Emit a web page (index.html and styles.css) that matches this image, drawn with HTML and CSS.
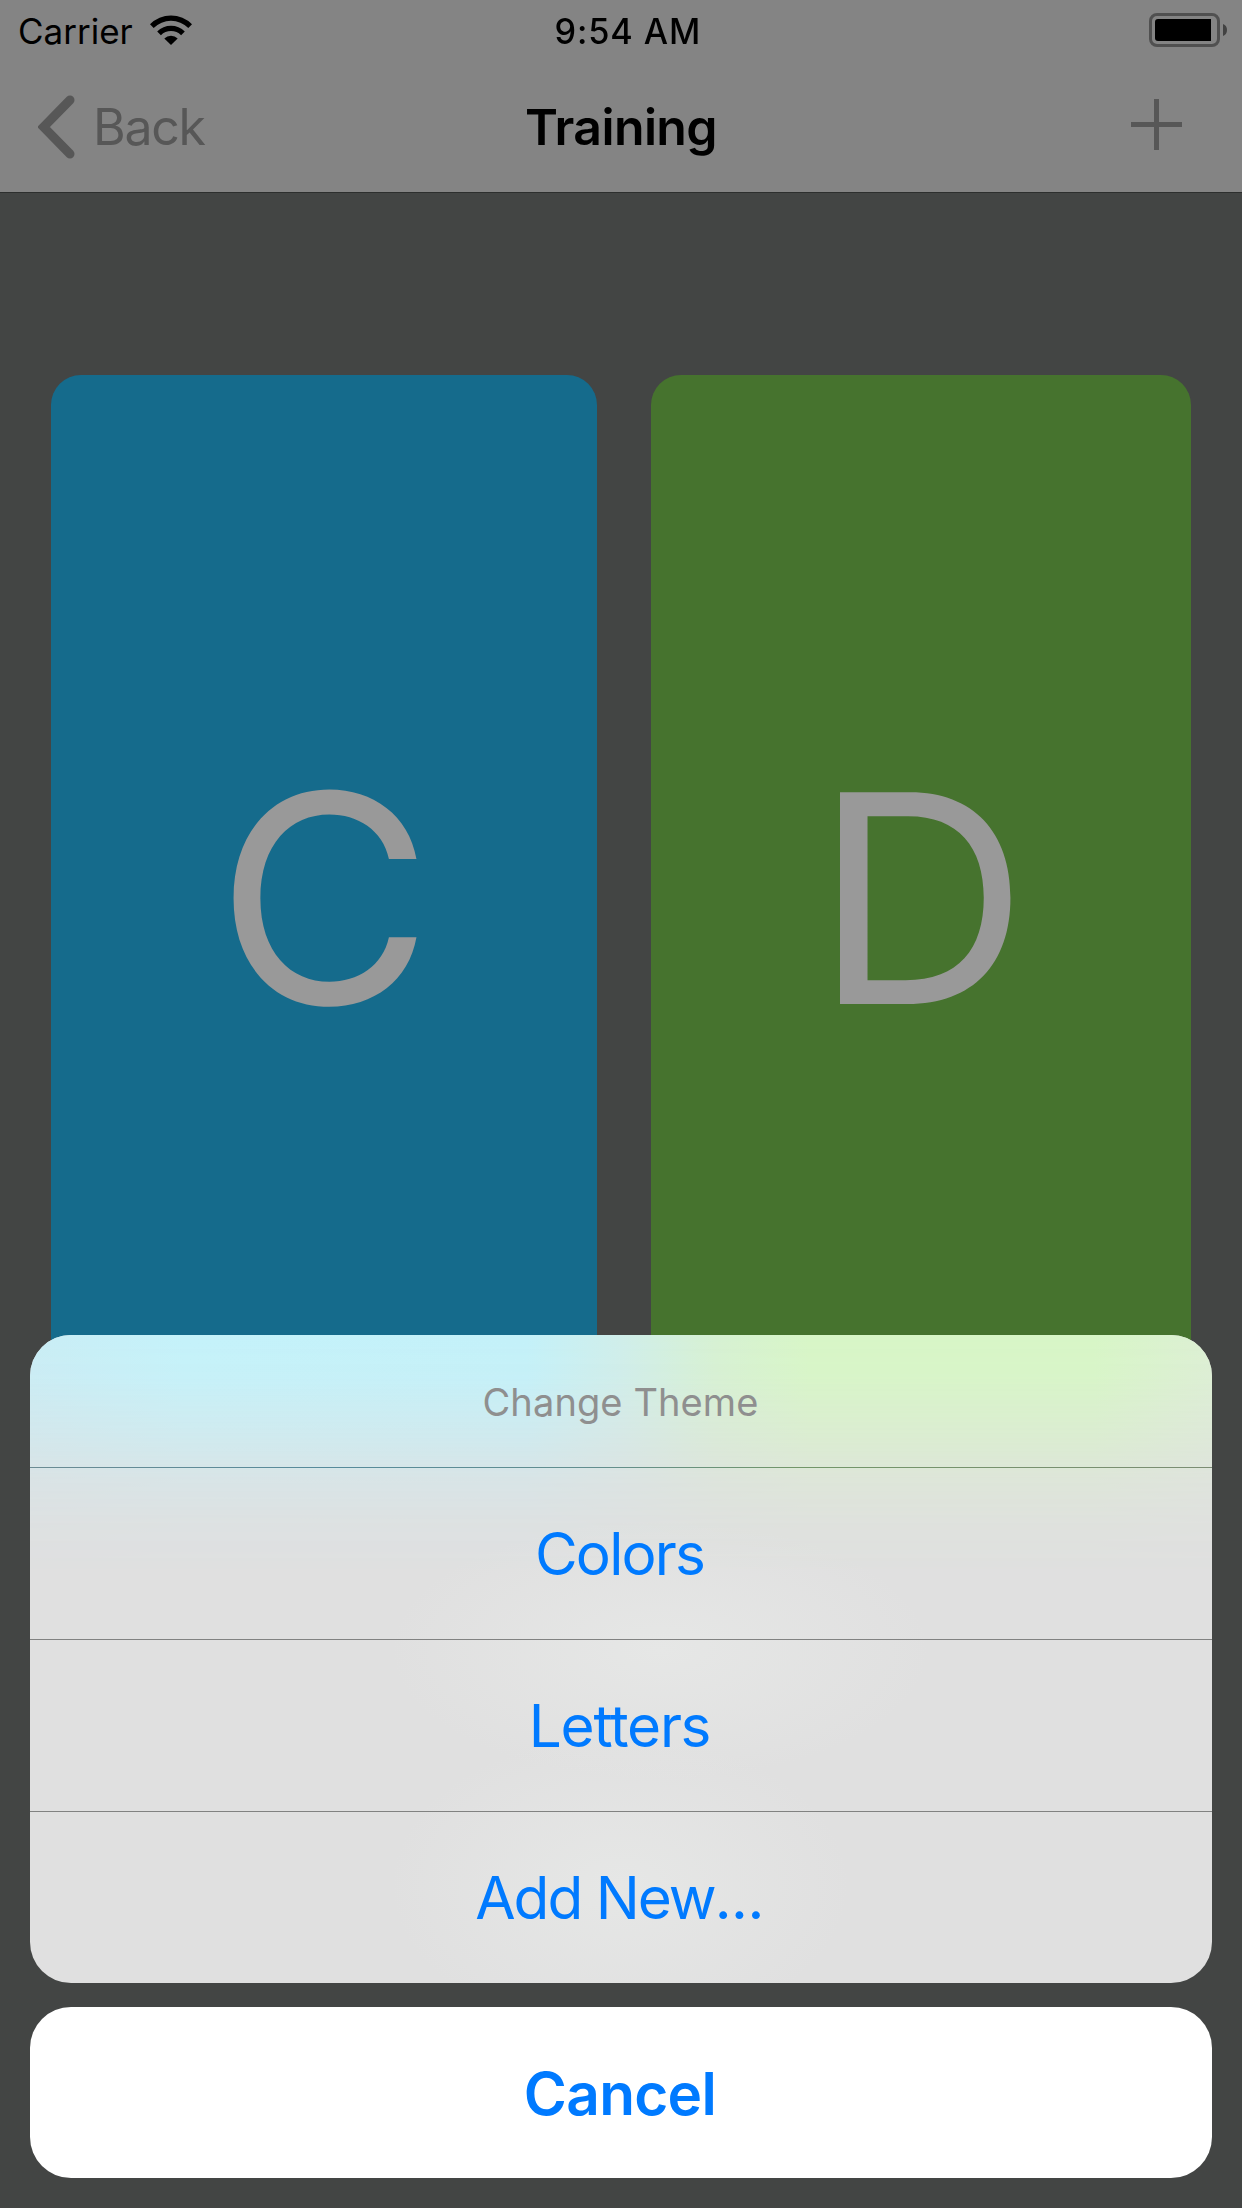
FILE: index.html
```html
<!DOCTYPE html>
<html lang="en">
<head>
<meta charset="utf-8">
<title>Training</title>
<link rel="stylesheet" href="styles.css">
</head>
<body>
<div class="screen">
  <header class="top">
    <div class="status">
      <div class="status-left">
        <span class="carrier">Carrier</span>
        <svg class="wifi" width="42" height="30" viewBox="0 0 42 30">
          <path d="M0 9.3A29.5 29.5 0 0 1 42 9.3L38.3 13A24.4 24.4 0 0 0 3.7 13Z"/>
          <path d="M7.2 16.5A19.4 19.4 0 0 1 34.8 16.5L31.1 20.2A14.2 14.2 0 0 0 10.9 20.2Z"/>
          <path d="M14.3 23.6A9.5 9.5 0 0 1 27.7 23.6L21 30Z"/>
        </svg>
      </div>
      <span class="time">9:54 AM</span>
      <svg class="battery" width="78" height="34" viewBox="0 0 78 34">
        <rect x="1.5" y="1.5" width="68" height="31" rx="6.5" fill="none" stroke="#505050" stroke-width="3"/>
        <path d="M9 6H62V28H9Q6 28 6 25V9Q6 6 9 6Z"/>
        <path d="M74 11Q78 12.5 78 17T74 23Z" fill="#424242"/>
      </svg>
    </div>
    <nav class="nav">
      <div class="back">
        <svg width="37" height="64" viewBox="0 0 37 64"><path d="M32 5L5.500 32L32 59" fill="none" stroke="#575757" stroke-width="9" stroke-linecap="round"/></svg>
        <span class="back-label">Back</span>
      </div>
      <h1 class="title">Training</h1>
      <svg class="add" width="51" height="51" viewBox="0 0 51 51"><path d="M23 0H28V23H51V28H28V51H23V28H0V23H23Z" fill="#575757"/></svg>
    </nav>
  </header>
  <main class="cards">
    <div class="card card-blue"><span>C</span></div>
    <div class="card card-green"><span>D</span></div>
  </main>
  <div class="sheet">
    <div class="menu">
      <div class="menu-title"><span>Change Theme</span></div>
      <div class="item item-first"><span class="colors">Colors</span></div>
      <div class="item"><span class="letters">Letters</span></div>
      <div class="item"><span class="new">Add New<span class="dots">...</span></span></div>
    </div>
    <div class="cancel"><span>Cancel</span></div>
  </div>
</div>
</body>
</html>
```
FILE: styles.css
```css
* { box-sizing: border-box; }
body { margin: 0; font-family: Inter, "Liberation Sans", sans-serif; }
svg { display: block; }
.screen {
  position: relative;
  width: 1242px;
  height: 2208px;
  overflow: hidden;
  background: #434544;
}
.top {
  height: 193px;
  background: #848484;
  border-bottom: 1px solid #2d2f2e;
}
.status {
  height: 60px;
  display: grid;
  grid-template-columns: 1fr auto 1fr;
  align-items: center;
  padding: 2px 15px 0 28px;
}
.status-left { display: flex; align-items: center; gap: 17px; margin-left: -10px; }
.carrier { font-size: 35px; }
.wifi { margin-top: -3px; }
.time { font-size: 35px; font-weight: 500; letter-spacing: 0.9px; transform: scaleX(0.98); }
.battery { justify-self: end; margin-top: -2px; }
.nav {
  height: 132px;
  display: grid;
  grid-template-columns: 1fr auto 1fr;
  align-items: center;
  padding: 2px 60px 0;
}
.back { display: flex; align-items: center; gap: 18px; margin-left: -22px; color: #575757; }
.back-label { font-size: 50px; letter-spacing: -1.3px; }
.title { margin: 0; font-size: 50px; font-weight: 600; letter-spacing: -0.6px; }
.add { justify-self: end; margin-top: -5px; }
.cards {
  display: grid;
  grid-template-columns: 546px 540px;
  gap: 54px;
  padding: 182px 51px 0;
}
.card {
  height: 1046px;
  border-radius: 30px;
  display: flex;
  align-items: center;
  justify-content: center;
  font-size: 291px;
  color: #999;
}
.card span { transform: scaleX(1.02); }
.card-blue { background: #156b8c; }
.card-green { background: #46732e; }
.sheet {
  position: absolute;
  left: 30px;
  right: 30px;
  bottom: 30px;
  display: flex;
  flex-direction: column;
  gap: 24px;
  color: #007aff;
  font-size: 58.5px;
}
.menu {
  position: relative;
  isolation: isolate;
  overflow: hidden;
  border-radius: 41px;
  background:
    radial-gradient(ellipse 270px 130px at 630px 315px, #e6e7e6, #e6e7e600),
    radial-gradient(ellipse 230px 150px at 590px 550px, #e6e7e6, #e6e7e600),
    #e0e0e0;
}
.menu::before {
  content: "";
  position: absolute;
  z-index: -1;
  inset: 0 0 auto;
  height: 240px;
  background: linear-gradient(90deg, #c9edf5 0, #c4f2fa 13%, #c3f1f9 42%, #cfeeea 50%, #d6f1d2 58%, #d7f6c6 66%, #d7f6c6 90%, #dcefd3 100%);
  mask-image: linear-gradient(#000 0, #000000e8 18%, #00000090 43%, #00000044 60%, #00000018 78%, transparent);
}
.menu-title {
  height: 132px;
  padding: 2px 1px 0 0;
  display: flex;
  align-items: center;
  justify-content: center;
  color: #8f8f8f;
  font-size: 38px;
  letter-spacing: 0.1px;
}
.item {
  height: 172px;
  padding: 1px 3px 0 0;
  display: flex;
  align-items: center;
  justify-content: center;
  background: linear-gradient(#818281, #818281) top / 100% 1px no-repeat;
}
.item-first {
  background-image: linear-gradient(90deg, #6b8b93, #568b9b 25%, #628e8e 48%, #729668 65%, #7b8d73);
}
.colors { letter-spacing: -1.8px; }
.letters { letter-spacing: -1.3px; }
.new { letter-spacing: -2px; }
.dots { letter-spacing: -0.5px; }
.cancel {
  height: 171px;
  padding: 1px 2px 0 0;
  border-radius: 41px;
  background: #fff;
  display: flex;
  align-items: center;
  justify-content: center;
  font-weight: 600;
  letter-spacing: -0.7px;
}
```
